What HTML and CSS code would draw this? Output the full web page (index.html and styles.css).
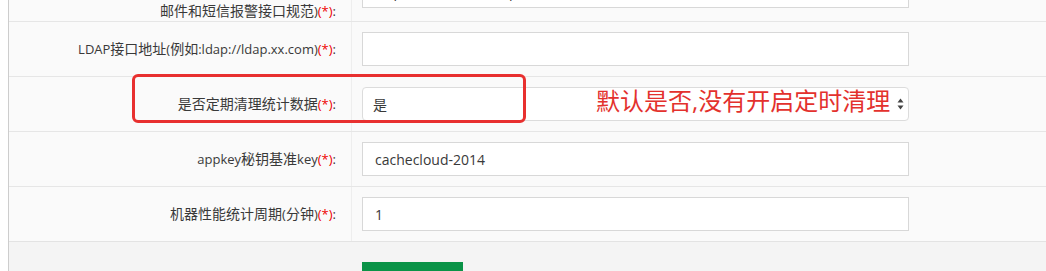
FILE: index.html
```html
<!DOCTYPE html>
<html>

<head>
    <meta charset="UTF-8">
    <meta name="viewport" content="width=device-width, initial-scale=1.0">
    <title>系统配置</title>
    <link rel="stylesheet" href="styles.css">
</head>

<body>
    <div class="page">
        <div class="form-table">
            <div class="row row-first">
                <div class="label"><span><span class="cn">报警接口地址</span>(<span class="cn">详见</span><br><span class="cn">邮件和短信报警接口规范</span>)<span class="req">(*)</span>:</span></div>
                <div class="field"><input class="text-input" type="text" value="http://alert.xx.com/api"></div>
            </div>
            <div class="row">
                <div class="label"><span>LDAP<span class="cn">接口地址</span>(<span class="cn">例如</span>:ldap://ldap.xx.com)<span class="req">(*)</span>:</span></div>
                <div class="field"><input class="text-input" type="text" value=""></div>
            </div>
            <div class="row row-mark">
                <div class="label"><span><span class="cn">是否定期清理统计数据</span><span class="req">(*)</span>:</span></div>
                <div class="field">
                    <div class="select-box">
                        <span>是</span>
                        <svg class="select-arrows" width="7" height="12" viewBox="0 0 7 12">
                            <path d="M3.5 0.5 L6.5 4.5 L0.5 4.5 Z" fill="#444"/>
                            <path d="M3.5 11.5 L6.5 7.5 L0.5 7.5 Z" fill="#444"/>
                        </svg>
                    </div>
                </div>
                <!-- 标注 -->
                <div class="mark-box"></div>
                <div class="mark-text">默认是否,没有开启定时清理</div>
            </div>
            <div class="row">
                <div class="label"><span>appkey<span class="cn">秘钥基准</span>key<span class="req">(*)</span>:</span></div>
                <div class="field"><input class="text-input" type="text" value="cachecloud-2014"></div>
            </div>
            <div class="row">
                <div class="label"><span><span class="cn">机器性能统计周期</span>(<span class="cn">分钟</span>)<span class="req">(*)</span>:</span></div>
                <div class="field"><input class="text-input" type="text" value="1"></div>
            </div>
        </div>
        <div class="form-actions">
            <button class="btn-save">保存</button>
        </div>
    </div>
</body>

</html>
```

FILE: styles.css
```css
body {
    margin: 0;
    font-family: "Open Sans", "Noto Sans CJK SC", sans-serif;
    font-size: 13px;
    color: #393939;
    background: #fff;
    overflow: hidden;
}

.page {
    margin-left: 8px;
    margin-top: -40px;
    border-left: 1px solid #cdcdcd;
}

.form-table {
    background: #fafafa;
}

.row {
    position: relative;
    display: grid;
    grid-template-columns: 343px 1fr;
    border-top: 1px solid #e6e6e6;
}

.row-first {
    min-height: 60px;
}

.label {
    padding: 10px 15px 10px 0;
    border-right: 1px solid #eeeeee;
    text-align: right;
    line-height: 20px;
    display: flex;
    align-items: center;
    justify-content: flex-end;
}

.label .cn {
    font-size: 14px;
}

.row-first .label {
    padding-bottom: 0;
    align-items: flex-end;
}

.req {
    color: #e00;
}

.field {
    padding: 10px 0 10px 10px;
    display: flex;
    align-items: center;
}

.text-input {
    box-sizing: border-box;
    width: 547px;
    height: 34px;
    margin: 0;
    padding: 0 12px;
    border: 1px solid #d8d8d8;
    border-radius: 0;
    background: #fff;
    font-family: "Open Sans", "Noto Sans CJK SC", sans-serif;
    font-size: 14px;
    color: #393939;
    outline: none;
}

.select-box {
    box-sizing: border-box;
    width: 547px;
    height: 34px;
    padding: 0 4px 0 10px;
    border: 1px solid #dcdcdc;
    border-radius: 4px;
    background: #fff;
    font-size: 14px;
    display: flex;
    align-items: center;
    justify-content: space-between;
}

.select-arrows {
    display: block;
}

.mark-box {
    position: absolute;
    left: 123px;
    top: -3px;
    width: 388px;
    height: 43px;
    border: 3px solid #e8302f;
    border-radius: 6px;
    pointer-events: none;
}

.mark-text {
    position: absolute;
    left: 587px;
    top: 8px;
    font-size: 24px;
    line-height: 32px;
    color: #e3312d;
    white-space: nowrap;
}

.form-actions {
    border-top: 1px solid #e3e3e3;
    background: #f4f4f4;
    padding: 20px 0 20px 353px;
}

.btn-save {
    width: 101px;
    height: 34px;
    border: none;
    background: #0a9347;
    color: #fff;
    font-size: 14px;
    font-family: "Open Sans", "Noto Sans CJK SC", sans-serif;
}
```
